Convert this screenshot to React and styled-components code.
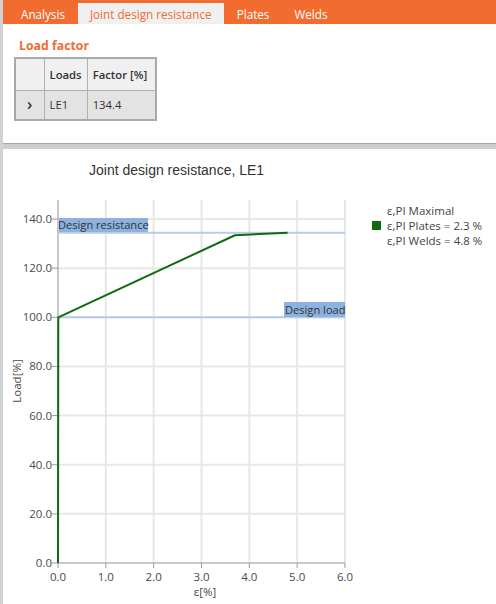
import React from 'react';
import styled, { createGlobalStyle } from 'styled-components';

const uiFont = `"Open Sans", "Noto Sans", sans-serif`;

const GlobalStyle = createGlobalStyle`
  html, body {
    margin: 0;
    padding: 0;
    background: #ffffff;
  }
  body {
    font-family: ${uiFont};
  }
`;

// Window shell with the grey splitter strip on the left
const Shell = styled.div`
  width: 493px;
  height: 604px;
  border-left: 3px solid #d2d2d2;
  display: flex;
  flex-direction: column;
  overflow: hidden;
`;

const TabBar = styled.div`
  height: 24px;
  background: #f26c30;
  display: flex;
  align-items: flex-end;
  padding-left: 6px;
  gap: 1px;
`;

const Tab = styled.div`
  height: 21px;
  padding: 0 12px;
  display: flex;
  align-items: center;
  font-size: 11.7px;
  color: ${(p) => (p.$active ? '#f26c30' : '#ffffff')};
  background: ${(p) => (p.$active ? '#f0f0f0' : 'transparent')};
`;

const TopPanel = styled.div`
  height: 119px;
  padding: 14px 0 0 11px;
  box-sizing: border-box;
`;

const SectionTitle = styled.div`
  font-size: 12.3px;
  font-weight: 700;
  color: #f26c30;
  margin: 0 0 3px 5px;
  line-height: 16px;
`;

const Grid = styled.table`
  border-collapse: collapse;
  border: 2px solid #a9a9a9;
  font-size: 11.3px;
  color: #333333;
`;

const HeadCell = styled.th`
  height: 32px;
  padding: 0 5px;
  text-align: left;
  font-weight: 600;
  background: #f0f0f0;
  border: 1px solid #b0b0b0;
  width: ${(p) => p.$w}px;
  box-sizing: border-box;
`;

const Cell = styled.td`
  height: 28px;
  padding: 0 5px;
  background: #e3e3e3;
  border: 1px solid #b0b0b0;
  text-align: ${(p) => (p.$center ? 'center' : 'left')};
`;

const RowMarker = styled.span`
  font-size: 16px;
  font-weight: 600;
  color: #333333;
  line-height: 1;
`;

const Splitter = styled.div`
  height: 5px;
  border-top: 1px solid #a6a6a6;
  background: #cdcdcd;
`;

const ChartPanel = styled.div`
  flex: 1;
  display: flex;
  flex-direction: column;
`;

const ChartTitle = styled.div`
  font-family: "Liberation Sans", Arial, sans-serif;
  font-size: 14px;
  color: #333333;
  padding: 13px 0 0 86px;
  height: 46px;
  box-sizing: border-box;
`;

const ChartBody = styled.div`
  display: flex;
  align-items: flex-start;
`;

const Legend = styled.div`
  padding: 8px 0 0 14px;
  font-size: 11.5px;
  color: #444444;
  line-height: 15px;
`;

const LegendRow = styled.div`
  display: flex;
  align-items: center;
`;

const Swatch = styled.span`
  width: 9px;
  height: 9px;
  margin-right: 6px;
  background: ${(p) => p.$color || 'transparent'};
`;

// plot scale: 6 % strain across, 140 % load up
const X0 = 55;
const Y0 = 368;
const sx = (v) => X0 + v * 47.83;
const sy = (v) => Y0 - v * 2.457;
const TOP = 5;
const RIGHT = sx(6);

const curve = [
  [0, 0],
  [0.006, 100],
  [3.7, 133.4],
  [4.8, 134.4],
];

const tickFont = { fontFamily: uiFont, fontSize: 11.5, fill: '#4a4a4a' };

function Plot() {
  const xs = [0, 1, 2, 3, 4, 5, 6];
  const ys = [0, 20, 40, 60, 80, 100, 120, 140];
  return (
    <svg width="355" height="409" viewBox="0 0 355 409">
      {xs.slice(1).map((v) => (
        <line key={'gx' + v} x1={sx(v)} x2={sx(v)} y1={TOP} y2={Y0} stroke="#e7e7e7" strokeWidth="2" />
      ))}
      {ys.slice(1).map((v) => (
        <line key={'gy' + v} x1={X0} x2={RIGHT} y1={sy(v)} y2={sy(v)} stroke="#e7e7e7" strokeWidth="2" />
      ))}

      {/* reference levels */}
      <line x1={X0} x2={RIGHT} y1={sy(134.4)} y2={sy(134.4)} stroke="#b6cde8" strokeWidth="2" />
      <line x1={X0} x2={RIGHT} y1={sy(100)} y2={sy(100)} stroke="#b6cde8" strokeWidth="2" />
      <rect x="54" y="23" width="91" height="14" fill="#8db2e0" />
      <text x="55" y="34" {...tickFont} fontSize="11.1" fill="#333">Design resistance</text>
      <rect x="281" y="107" width="61" height="15" fill="#8db2e0" />
      <text x="282" y="118.5" {...tickFont} fontSize="11.1" fill="#333">Design load</text>

      {/* axes */}
      <line x1={X0} x2={X0} y1={TOP} y2={Y0 + 1} stroke="#c8c8c8" strokeWidth="2" />
      <line x1={X0} x2={RIGHT} y1={Y0} y2={Y0} stroke="#c8c8c8" strokeWidth="2" />

      {ys.map((v) => (
        <g key={'ty' + v}>
          <line x1={X0 - 6} x2={X0} y1={sy(v)} y2={sy(v)} stroke="#9a9a9a" strokeWidth="1" />
          <text x={X0 - 6} y={sy(v) + 4} textAnchor="end" {...tickFont}>{v.toFixed(1)}</text>
        </g>
      ))}
      {xs.map((v) => (
        <g key={'tx' + v}>
          <line x1={sx(v)} x2={sx(v)} y1={Y0} y2={Y0 + 5} stroke="#9a9a9a" strokeWidth="1" />
          <text x={sx(v)} y={Y0 + 18} textAnchor="middle" {...tickFont}>{v.toFixed(1)}</text>
        </g>
      ))}

      <text x="202" y="401" textAnchor="middle" {...tickFont}>ε[%]</text>
      <text
        transform="translate(18 186) rotate(-90)"
        textAnchor="middle"
        {...tickFont}
      >
        Load[%]
      </text>

      <polyline
        points={curve.map(([a, b]) => `${sx(a)},${sy(b)}`).join(' ')}
        fill="none"
        stroke="#0f6a12"
        strokeWidth="2"
        strokeLinejoin="round"
      />
    </svg>
  );
}

export default function App() {
  return (
    <>
      <GlobalStyle />
      <Shell>
        <TabBar>
          <Tab>Analysis</Tab>
          <Tab $active>Joint design resistance</Tab>
          <Tab>Plates</Tab>
          <Tab>Welds</Tab>
        </TabBar>

        <TopPanel>
          <SectionTitle>Load factor</SectionTitle>
          <Grid>
            <thead>
              <tr>
                <HeadCell $w={29} />
                <HeadCell $w={43}>Loads</HeadCell>
                <HeadCell $w={69}>Factor [%]</HeadCell>
              </tr>
            </thead>
            <tbody>
              <tr>
                <Cell $center><RowMarker>&#x203A;</RowMarker></Cell>
                <Cell>LE1</Cell>
                <Cell>134.4</Cell>
              </tr>
            </tbody>
          </Grid>
        </TopPanel>

        <Splitter />

        <ChartPanel>
          <ChartTitle>Joint design resistance, LE1</ChartTitle>
          <ChartBody>
            <Plot />
            <Legend>
              <LegendRow>
                <Swatch />
                ε,PI Maximal
              </LegendRow>
              <LegendRow>
                <Swatch $color="#0f6a12" />
                ε,PI Plates = 2.3 %
              </LegendRow>
              <LegendRow>
                <Swatch />
                ε,PI Welds = 4.8 %
              </LegendRow>
            </Legend>
          </ChartBody>
        </ChartPanel>
      </Shell>
    </>
  );
}
